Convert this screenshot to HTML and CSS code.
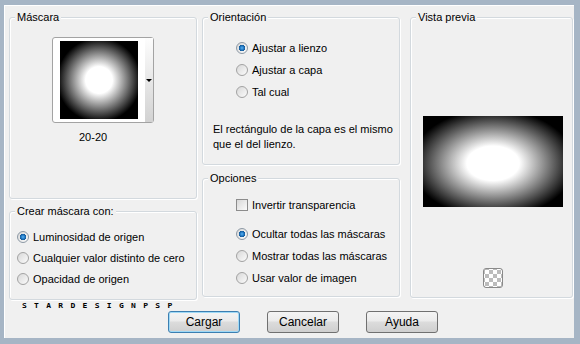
FILE: index.html
```html
<!DOCTYPE html>
<html lang="es">
<head>
    <meta charset="UTF-8">
    <title>Máscara</title>
    <link rel="stylesheet" href="styles.css">
</head>
<body>
    <div class="window">
        <div class="columns">
            <div class="col col-left">
                <div class="group group-mask">
                    <span class="group-title">Máscara</span>
                    <div class="mask-picker">
                        <div class="mask-thumb"></div>
                        <div class="mask-drop"><span class="arrow"></span></div>
                    </div>
                    <div class="mask-name">20-20</div>
                </div>

                <div class="group group-create">
                    <span class="group-title">Crear máscara con:</span>
                    <div class="options options-create">
                        <div class="opt"><span class="radio checked"></span>Luminosidad de origen</div>
                        <div class="opt"><span class="radio"></span>Cualquier valor distinto de cero</div>
                        <div class="opt"><span class="radio"></span>Opacidad de origen</div>
                    </div>
                </div>

                <div class="signature">STARDESIGNPSP</div>
            </div>

            <div class="col col-mid">
                <div class="group group-orient">
                    <span class="group-title">Orientación</span>
                    <div class="options options-orient">
                        <div class="opt wide"><span class="radio checked"></span>Ajustar a lienzo</div>
                        <div class="opt wide"><span class="radio"></span>Ajustar a capa</div>
                        <div class="opt wide"><span class="radio"></span>Tal cual</div>
                    </div>
                    <p class="note">El rectángulo de la capa es el mismo<br>que el del lienzo.</p>
                </div>

                <div class="group group-opts">
                    <span class="group-title">Opciones</span>
                    <div class="options options-check">
                        <div class="opt wide"><span class="check"></span>Invertir transparencia</div>
                    </div>
                    <div class="options options-show">
                        <div class="opt wide"><span class="radio checked"></span>Ocultar todas las máscaras</div>
                        <div class="opt wide"><span class="radio"></span>Mostrar todas las máscaras</div>
                        <div class="opt wide"><span class="radio"></span>Usar valor de imagen</div>
                    </div>
                </div>
            </div>

            <div class="col col-right">
                <div class="group group-preview">
                    <span class="group-title">Vista previa</span>
                    <div class="preview-body">
                        <div class="preview"></div>
                        <div class="checker"></div>
                    </div>
                </div>
            </div>
        </div>

        <div class="buttons">
            <button class="btn default">Cargar</button>
            <button class="btn">Cancelar</button>
            <button class="btn">Ayuda</button>
        </div>
    </div>
</body>
</html>
```

FILE: styles.css
```css
body {
    margin: 0;
    font-family: 'Liberation Sans', Arial, sans-serif;
    font-size: 11px;
    color: #000;
}

.window {
    width: 580px;
    height: 344px;
    box-sizing: border-box;
    border-style: solid;
    border-color: #a6b5c5;
    border-width: 5px 6px 6px 4px;
    background: #f0f0f0;
    padding: 12px 0 0 5px;
    box-shadow: inset 1px 1px 0 #fff;
}

.columns {
    display: flex;
    align-items: flex-start;
}

.col-left {
    width: 188px;
}

.col-mid {
    width: 198px;
    margin-left: 5px;
}

.col-right {
    width: 163px;
    margin-left: 10px;
}

.group {
    box-sizing: border-box;
    border: 1px solid #d3d9de;
    border-radius: 3px;
    box-shadow: 1px 1px 0 #fff, inset 1px 1px 0 #fff;
}

.group-title {
    display: block;
    width: fit-content;
    line-height: 14px;
    margin: -8px 0 0 5px;
    padding: 0 2px;
    background: #f0f0f0;
}

.group-mask {
    height: 182px;
}

.group-create {
    height: 89px;
    margin-top: 12px;
}

.group-orient {
    height: 148px;
}

.group-opts {
    height: 119px;
    margin-top: 13px;
}

.group-preview {
    height: 281px;
}

/* mascara */
.mask-picker {
    display: flex;
    width: 102px;
    height: 86px;
    box-sizing: border-box;
    margin: 13px auto 0;
    padding-left: 7px;
    border: 1px solid #a3a3a3;
    border-radius: 3px;
    background: #fff;
    align-items: center;
}

.mask-thumb {
    width: 78px;
    height: 78px;
    background: radial-gradient(circle 42px at 50% 50%, #fff 0, #fff 32%, #000 100%);
}

.mask-drop {
    align-self: stretch;
    width: 8px;
    margin-left: 7px;
    background: linear-gradient(#fdfdfd, #d2d2d2);
    display: flex;
    align-items: center;
    justify-content: center;
}

.arrow {
    width: 0;
    height: 0;
    border-left: 3px solid transparent;
    border-right: 3px solid transparent;
    border-top: 3px solid #000;
}

.mask-name {
    line-height: 14px;
    margin: 7px 0 0 69px;
}

/* opciones */
.opt {
    display: flex;
    align-items: center;
    height: 21px;
    padding-left: 7px;
    white-space: nowrap;
}

.opt.wide {
    height: 22px;
    padding-left: 33px;
}

.options-create {
    margin-top: 8px;
}

.options-orient {
    margin-top: 13px;
}

.options-check {
    margin-top: 9px;
}

.options-show {
    margin-top: 7px;
}

.radio,
.check {
    flex: none;
    width: 12px;
    height: 12px;
    box-sizing: border-box;
    margin-right: 4px;
    border: 1px solid #a2a2a2;
    background: linear-gradient(135deg, #d8d8d8, #fbfbfb);
}

.radio {
    border-radius: 50%;
}

.radio.checked {
    border-color: #8d99a5;
    background:
        radial-gradient(circle at 50% 50%, #5ab4f2 0, #1f74c0 2px, #155a98 3px, transparent 3.5px),
        linear-gradient(135deg, #d8d8d8, #fbfbfb);
}

.check {
    border-color: #8c8c8c;
}

.note {
    margin: 19px 0 0 10px;
    line-height: 15px;
}

.signature {
    margin: 2px 0 0 13px;
    font-family: 'DejaVu Sans Mono', monospace;
    font-size: 8px;
    font-weight: bold;
    line-height: 8px;
    letter-spacing: 7.3px;
    transform: scaleY(0.8);
    transform-origin: left center;
}

/* vista previa */
.preview-body {
    display: flex;
    flex-direction: column;
    align-items: center;
    padding-left: 2px;
}

.preview {
    width: 140px;
    height: 91px;
    margin-top: 92px;
    background: radial-gradient(ellipse 82px 54px at 50% 52%, #fff 0, #fff 32%, #000 100%);
}

.checker {
    width: 20px;
    height: 20px;
    box-sizing: border-box;
    margin-top: 61px;
    border: 1px solid #8a8a8a;
    border-radius: 3px;
    background: repeating-conic-gradient(#bcbcbc 0 25%, #fff 0 50%) 1px 1px / 8px 8px;
}

/* botones */
.buttons {
    display: flex;
    gap: 27px;
    margin: 1px 0 0 159px;
}

.btn {
    width: 72px;
    height: 22px;
    padding: 0;
    font-family: inherit;
    font-size: 12px;
    color: #000;
    border: 1px solid #707070;
    border-radius: 3px;
    background: linear-gradient(#f4f4f4, #ebebeb 45%, #dcdcdc 50%, #cfcfcf);
}

.btn.default {
    border-color: #3c7fb1;
    box-shadow: inset 0 0 0 1px #9fd9f6;
}
```
